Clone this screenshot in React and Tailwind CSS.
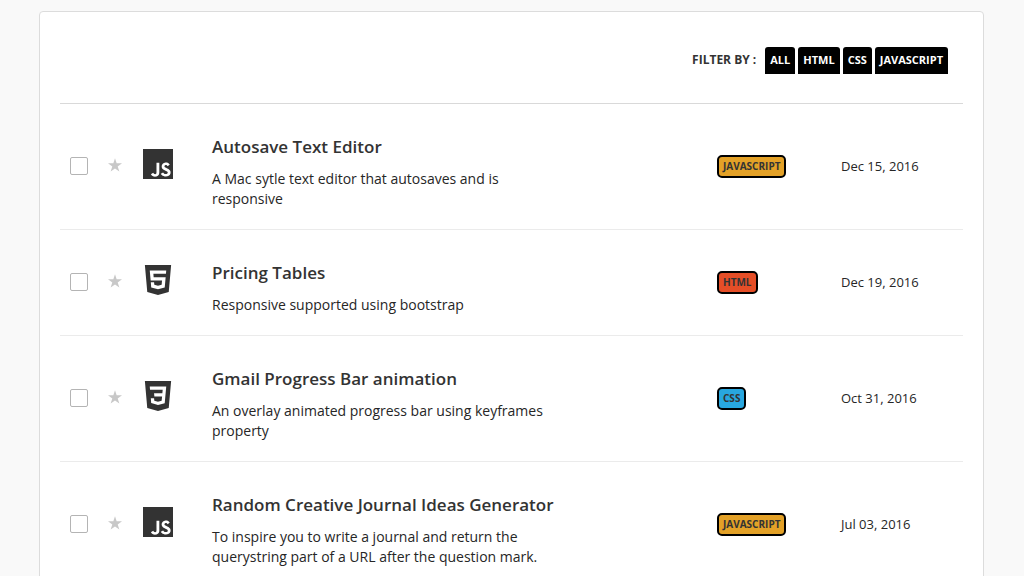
const ICONS = {
  JAVASCRIPT:
    'M0 0h24v24H0V0zm22.034 18.276c-.175-1.095-.888-2.015-3.003-2.873-.736-.345-1.554-.585-1.797-1.14-.091-.33-.105-.51-.046-.705.15-.646.915-.84 1.515-.66.39.12.75.42.976.9 1.034-.676 1.034-.676 1.755-1.125-.27-.42-.404-.601-.586-.78-.63-.705-1.469-1.065-2.834-1.034l-.705.089c-.676.165-1.32.525-1.71 1.005-1.14 1.291-.811 3.541.569 4.471 1.365 1.02 3.361 1.244 3.616 2.205.24 1.17-.87 1.545-1.966 1.41-.811-.18-1.26-.586-1.755-1.336l-1.83 1.051c.21.48.45.689.81 1.109 1.74 1.756 6.09 1.666 6.871-1.004.029-.09.24-.705.074-1.65l.046.067zm-8.983-7.245h-2.248c0 1.938-.009 3.864-.009 5.805 0 1.232.063 2.363-.138 2.711-.33.689-1.18.601-1.566.48-.396-.196-.597-.466-.83-.855-.063-.105-.11-.196-.127-.196l-1.825 1.125c.305.63.75 1.172 1.324 1.517.855.51 2.004.675 3.207.405.783-.226 1.458-.691 1.811-1.411.51-.93.402-2.07.397-3.346.012-2.054 0-4.109 0-6.179l.004-.056z',
  HTML: 'M1.5 0h21l-1.91 21.563L11.977 24l-8.564-2.438L1.5 0zm7.031 9.75l-.232-2.718 10.059.003.23-2.622L5.412 4.41l.698 8.01h9.126l-.326 3.426-2.91.804-2.955-.81-.188-2.11H6.248l.33 4.171L12 19.351l5.379-1.443.744-8.157H8.531z',
  CSS: 'M1.5 0h21l-1.91 21.563L11.977 24l-8.565-2.438L1.5 0zm17.09 4.413L5.41 4.41l.213 2.622 10.125.002-.255 2.716h-6.64l.24 2.573h6.182l-.366 3.523-2.91.804-2.956-.81-.188-2.11h-2.61l.29 3.855L12 19.288l5.373-1.53L18.59 4.414z',
};

const TAG_COLORS = {
  JAVASCRIPT: 'bg-[#e3a127]',
  HTML: 'bg-[#e54e27]',
  CSS: 'bg-[#28a7df]',
};

const FILTERS = ['ALL', 'HTML', 'CSS', 'JAVASCRIPT'];

const PROJECTS = [
  { title: 'Autosave Text Editor', text: 'A Mac sytle text editor that autosaves and is responsive', tag: 'JAVASCRIPT', date: 'Dec 15, 2016' },
  { title: 'Pricing Tables', text: 'Responsive supported using bootstrap', tag: 'HTML', date: 'Dec 19, 2016' },
  { title: 'Gmail Progress Bar animation', text: 'An overlay animated progress bar using keyframes property', tag: 'CSS', date: 'Oct 31, 2016' },
  { title: 'Random Creative Journal Ideas Generator', text: 'To inspire you to write a journal and return the querystring part of a URL after the question mark.', tag: 'JAVASCRIPT', date: 'Jul 03, 2016' },
];

function ProjectRow({ project }) {
  const { title, text, tag, date } = project;
  return (
    <tr className="border-b border-[#ebebeb]">
      <td className="w-12 pb-0.5 pl-2.5">
        <input
          type="checkbox"
          aria-label={`Select ${title}`}
          className="block size-[18px] appearance-none rounded-xs border border-[#b4b4b4] bg-white checked:bg-[#333]"
        />
      </td>
      <td className="w-[35px] pb-1">
        <button type="button" aria-label={`Star ${title}`} className="block text-[#c8c8c8]">
          <svg viewBox="0 0 26 25" className="size-3.5" fill="currentColor" aria-hidden="true">
            <path d="M13 0l3.1 9.4H26l-8 5.8 3.1 9.6-8.1-5.9-8.1 5.9L8 15.2 0 9.4h9.9z" />
          </svg>
        </button>
      </td>
      <td className="w-[69px] pb-1.5">
        <svg viewBox="0 0 24 24" className="size-[30px]" fill="#333" aria-hidden="true">
          <path d={ICONS[tag]} />
        </svg>
      </td>
      <td className="pt-[31px] pb-5">
        <h2 className="mb-2.5 text-[17px] leading-6 font-semibold">{title}</h2>
        <p className="max-w-[350px] text-sm leading-5 text-[#262626]">{text}</p>
      </td>
      <td className="w-[124px] pb-0.5">
        <span className={`inline-block rounded-[5px] border-2 border-black px-1 align-middle text-[10px] leading-[19px] font-bold ${TAG_COLORS[tag]}`}>
          {tag}
        </span>
      </td>
      <td className="w-[122px] pb-0.5 text-[13px] leading-5 text-[#262626]">{date}</td>
    </tr>
  );
}

export default function App() {
  return (
    <div className="min-h-screen bg-[#f9f9f9] pt-[11px] pr-10 pl-[39px] font-['Open_Sans',sans-serif] text-[#333]">
      <main className="rounded-sm border border-[#dcdcdc] bg-white px-5 pb-5">
        <div className="flex items-center justify-end border-b border-[#d9d9d9] pt-[35px] pr-[15px] pb-[29px]">
          <span className="mr-[9px] pb-0.5 text-xs leading-5 font-bold">FILTER BY :</span>
          <div className="flex gap-[3px]">
            {FILTERS.map((name) => (
              <button key={name} type="button" className="rounded-t-[3px] bg-black px-[5px] pb-0.5 text-[11px] leading-[25px] font-bold text-white">
                {name}
              </button>
            ))}
          </div>
        </div>
        <table className="w-full table-auto border-collapse">
          <tbody>
            {PROJECTS.map((project) => (
              <ProjectRow key={project.title} project={project} />
            ))}
          </tbody>
        </table>
      </main>
    </div>
  );
}
